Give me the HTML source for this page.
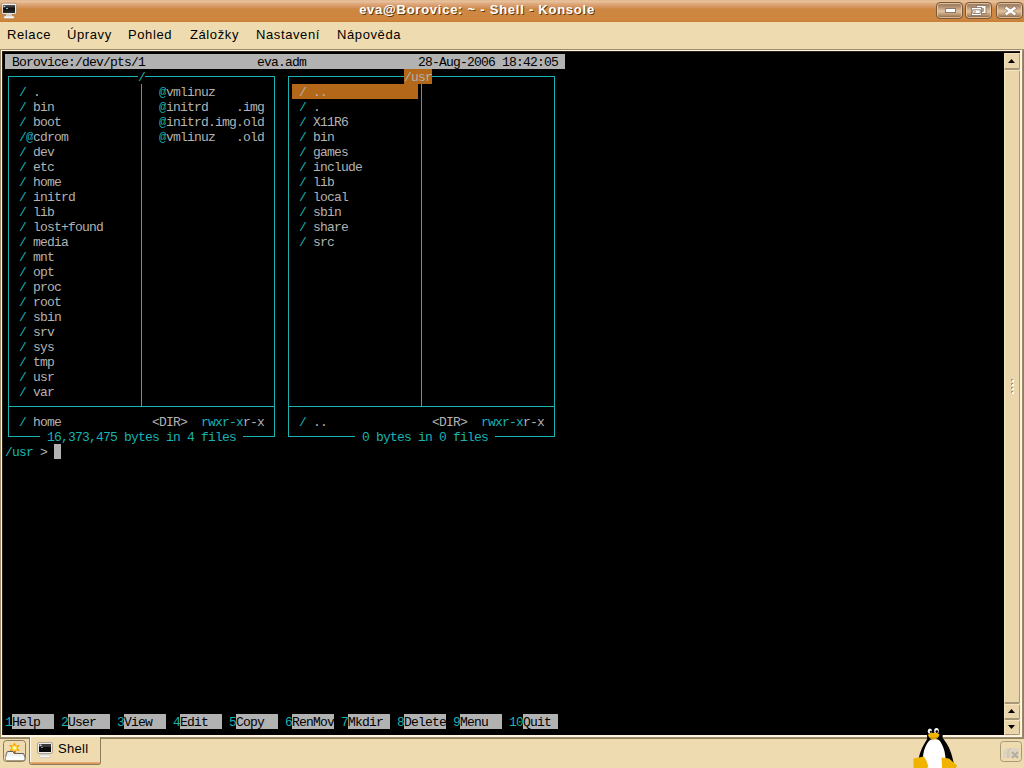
<!DOCTYPE html>
<html><head><meta charset="utf-8"><style>
*{margin:0;padding:0;box-sizing:border-box}
html,body{width:1024px;height:768px;overflow:hidden;background:#eedcb0;position:relative;font-family:"Liberation Sans",sans-serif}
.r{position:absolute}
.t{position:absolute;height:15px;line-height:15px;padding-top:1px;font-family:"Liberation Mono",monospace;font-size:13px;letter-spacing:-0.8px;white-space:pre}
#title{position:absolute;left:0;top:0;width:1024px;height:22px;background:linear-gradient(#dfae84 0px,#e8c6a0 1px,#e2b088 3px,#dba070 5px,#d49460 7px,#cd8740 9px,#cd8740 20px,#cb7f38 21px)}
#ttext{position:absolute;left:277px;top:0;width:400px;text-align:center;color:#fff;font-weight:bold;font-size:13px;letter-spacing:0.75px;line-height:20px;text-shadow:1px 1px 0 rgba(60,30,0,0.75)}
.btn{position:absolute;top:2px;width:27px;height:17px;border:1px solid #7a5838;border-radius:4px;background:linear-gradient(#9a7a5a 0%,#a88868 20%,#e2c29e 55%,#b89470 80%,#7a5636 100%);box-shadow:inset 0 0 0 1px rgba(236,206,170,0.8)}
.btn svg{position:absolute;left:0;top:0}
#menu span{position:absolute;top:27px;font-size:13px;letter-spacing:0.6px;line-height:16px;color:#000}
#term{position:absolute;left:2px;top:51px;width:1002px;height:684px;background:#000;overflow:hidden}
#sb{position:absolute;left:1004px;top:0;width:16px;height:0}
.sbb{position:absolute;left:0;width:16px;background:#ead6aa;border-left:1px solid #f6e4bc;border-top:1px solid #f6e4bc;border-right:1px solid #a8987a;border-bottom:2px solid #a8987a;border-radius:2px}
.sbb svg{position:absolute;left:-1px;top:-1px}
#tabbar{position:absolute;left:0;top:735px;width:1024px;height:33px}
#bline{position:absolute;left:0;top:2px;width:1024px;height:2px;background:linear-gradient(#a4946f,#8c7c5c)}
#newbtn{position:absolute;left:3px;top:5px;width:23px;height:22px}
#tab{position:absolute;left:29px;top:2px;width:72px;height:28px;border-left:1px solid #8c7c5c;border-right:1px solid #8c7c5c;border-bottom:1px solid #8c7c5c;border-radius:0 0 3px 3px;background:#eedcb0;overflow:hidden;box-shadow:inset 1px 0 0 #fff8e8}
#tabface{position:absolute;left:0;bottom:0;width:100%;height:2px;background:linear-gradient(#eab078,#d89050)}
#tabtxt{position:absolute;left:28px;top:4px;font-size:13px;letter-spacing:0.3px;line-height:16px;color:#000}
#closetab{position:absolute;left:1000px;top:6px;width:22px;height:21px}
</style></head><body>
<div id="title"><div id="ttext">eva@Borovice: ~ - Shell - Konsole</div><div id="ticon" style="position:absolute;left:0;top:0;width:22px;height:22px"><svg width="22" height="22"><defs><linearGradient id="scr" x1="0" y1="0" x2="0" y2="1"><stop offset="0" stop-color="#5a5a5a"/><stop offset="0.45" stop-color="#101010"/><stop offset="1" stop-color="#303030"/></linearGradient></defs><rect x="1.8" y="3.3" width="14.6" height="11" rx="1.2" fill="#f0f0f0" stroke="#7a5a3a" stroke-opacity="0.55" stroke-width="0.8"/><rect x="3" y="5" width="12" height="8" fill="url(#scr)"/><path d="M3.6 5.6 L5.6 6.6 L3.6 7.6 Z" fill="#cde"/><rect x="6" y="8" width="2" height="1" fill="#9ab"/><rect x="6" y="14.2" width="6" height="2" fill="#dcdcdc"/><rect x="3.8" y="16" width="10.5" height="2.6" rx="1.3" fill="#f6f6f6" stroke="#7a5a3a" stroke-opacity="0.4" stroke-width="0.6"/></svg></div>
<div class="btn" style="left:936px"><svg width="27" height="17"><rect x="8.5" y="5.5" width="10" height="4" fill="#fff" stroke="#8a7a6a"/></svg></div>
<div class="btn" style="left:965px"><svg width="27" height="17"><rect x="10.5" y="2.5" width="9.5" height="8" fill="#fff" stroke="#8a7a6a" stroke-width="0.9"/><rect x="13.5" y="5.5" width="4" height="3" fill="#c8a078" stroke="#8a7a6a" stroke-width="0.6"/><rect x="5.5" y="4.5" width="10" height="8" fill="#fff" stroke="#8a7a6a" stroke-width="0.9"/><rect x="6.8" y="6.8" width="7.4" height="3.6" fill="#fff" stroke="#7a6a5a" stroke-width="0.8"/><rect x="7.5" y="7.5" width="2.5" height="2.2" fill="#d8b088"/></svg></div>
<div class="btn" style="left:996px"><svg width="27" height="17"><path d="M9.6 5.2 L17.4 10.8 M17.4 5.2 L9.6 10.8" stroke="#8a7a6a" stroke-width="3.6" stroke-linecap="square"/><path d="M9.6 5.2 L17.4 10.8 M17.4 5.2 L9.6 10.8" stroke="#fff" stroke-width="2.4" stroke-linecap="square"/></svg></div></div>
<div id="menu"><span style="left:7px">Relace</span><span style="left:67px">Úpravy</span><span style="left:128px">Pohled</span><span style="left:190px">Záložky</span><span style="left:256px">Nastavení</span><span style="left:337px">Nápověda</span></div>
<div id="term"></div>
<div class="r" style="left:0;top:49px;width:1024px;height:1px;background:#9c8c6c"></div>
<div class="r" style="left:0;top:49px;width:1px;height:690px;background:#9c8c6c"></div>
<div class="r" style="left:1022px;top:50px;width:2px;height:689px;background:linear-gradient(90deg,#a0906e,#887858)"></div><div class="r" style="left:1021px;top:49px;width:2px;height:2px;background:#b8a888;border-radius:0 2px 0 0"></div>
<div class="r" style="left:1px;top:50px;width:1021px;height:1px;background:#fff6e4"></div>
<div class="r" style="left:1px;top:50px;width:1px;height:687px;background:#fff6e4"></div>
<div class="r" style="left:1020px;top:50px;width:2px;height:687px;background:linear-gradient(90deg,#fff0d4,#fffaf0)"></div>
<div class="r" style="left:1px;top:735px;width:1021px;height:2px;background:linear-gradient(#fff0d4,#fffaf0)"></div>
<div class="r" style="left:2px;top:51px;width:1018px;height:2px;background:#000"></div><div class="r" style="left:2px;top:51px;width:1018px;height:1px;background:#2a2216"></div><div class="r" style="left:2px;top:51px;width:1px;height:684px;background:#2a2216"></div>
<div id="sb">
 <div class="sbb" style="top:53px;height:17px"><svg width="16" height="17"><path d="M4 10 L11 10 L7.5 6 Z" fill="#000"/></svg></div>
 <div class="sbb" style="top:70px;height:634px"><svg width="16" height="634"><g fill="#a8987a"><rect x="7" y="309" width="2" height="1"/><rect x="7" y="310" width="1" height="1"/><rect x="7" y="313" width="2" height="1"/><rect x="7" y="314" width="1" height="1"/><rect x="7" y="317" width="2" height="1"/><rect x="7" y="318" width="1" height="1"/><rect x="7" y="321" width="2" height="1"/><rect x="7" y="322" width="1" height="1"/></g><g fill="#fffaf0"><rect x="8" y="310" width="2" height="2"/><rect x="8" y="314" width="2" height="2"/><rect x="8" y="318" width="2" height="2"/><rect x="8" y="322" width="2" height="2"/></g></svg></div>
 <div class="sbb" style="top:704px;height:16px"><svg width="16" height="16"><path d="M4 9 L11 9 L7.5 5 Z" fill="#000"/></svg></div>
 <div class="sbb" style="top:720px;height:15px;border-bottom-width:1px"><svg width="16" height="15"><path d="M4 5 L11 5 L7.5 9 Z" fill="#000"/></svg></div>
</div>
<div id="tabbar">
 <div id="bline"></div>
 <div id="newbtn"><svg width="23" height="22"><rect x="0.5" y="0.5" width="22" height="21" rx="3" fill="#eedcb0" stroke="#8c7c5c"/>
<g transform="translate(11.5,8)"><path d="M0 -5.5 L1.8 -2.4 L5.3 -3 L2.9 0 L5.3 3 L1.8 2.4 L0 5.5 L-1.8 2.4 L-5.3 3 L-2.9 0 L-5.3 -3 L-1.8 -2.4 Z" fill="#ff9800"/><circle r="2.8" fill="#ffe030"/><circle r="1.4" fill="#fffbd0"/></g>
<path d="M3 20 L3 14.5 L4.5 11.5 L10 11.5 L11 13.5 L20.5 13.5 L21.5 16 L21.5 20 Z" fill="#f0f0f0" stroke="#505050" stroke-width="0.9"/>
<path d="M12 11 L12 13" stroke="#505050" stroke-width="0.9"/><rect x="3" y="16.5" width="18.5" height="3.5" fill="#fff"/></svg></div>
 <div id="tab"><div id="tabface"></div>
  <svg style="position:absolute;left:7px;top:5px" width="16" height="16"><rect x="0.5" y="0.5" width="15" height="11" rx="1.5" fill="#ececec" stroke="#9a8a7a" stroke-opacity="0.7"/><rect x="2" y="2" width="12" height="8" fill="#0c0c0c"/><rect x="2" y="2" width="12" height="3" fill="#3a3a3a"/><rect x="2.5" y="2.5" width="2" height="1.5" fill="#cde"/><rect x="4" y="5" width="2" height="1" fill="#889"/><rect x="5" y="12" width="6" height="1.5" fill="#d8d8d8"/><rect x="2.5" y="13" width="11" height="2.5" rx="1.2" fill="#f6f6f6" stroke="#9a8a7a" stroke-opacity="0.5" stroke-width="0.6"/></svg>
  <span id="tabtxt">Shell</span>
 </div>
 <div id="closetab"><svg width="22" height="21"><rect x="0.5" y="0.5" width="21" height="20" rx="3" fill="none" stroke="#a8987a"/><path d="M3 17 L3 10 L6.5 7 L19 7 L19 17 Z" fill="#ddd3c0"/><path d="M8 17 L8 10 L11 7" stroke="#c4b8a4" stroke-width="0.9" fill="none"/><path d="M12 11 L18 17 M18 11 L12 17" stroke="#b4ac9c" stroke-width="1.8"/></svg></div>
</div>
<svg id="tux" width="50" height="48" style="position:absolute;left:910px;top:720px">
 <path d="M17.2 19 C16.6 8 17.5 1 25 1 C32 1 33 8 32.6 18 C36 22 40 28 42 36 L43.5 42 L44 48 L8 48 L8.5 40 C9.5 33 12 27 17.2 19 Z" fill="#000"/>
 <path d="M20 20 C15 25 12.5 33 13 41 L14 48 L35 48 C36.5 38 35 27 29 20 C26 18.5 23 18.5 20 20 Z" fill="#fff"/>
 <ellipse cx="19.9" cy="11.2" rx="2.1" ry="2.6" fill="#fff"/><ellipse cx="26.5" cy="10.9" rx="2.3" ry="2.8" fill="#fff"/>
 <circle cx="20.8" cy="11.8" r="1.1" fill="#000"/><circle cx="26.8" cy="11.6" r="1.3" fill="#000"/>
 <path d="M18 15 C19 12.5 27 12 29.5 14.5 C29 17.5 26 19.5 23.5 19.5 C21 19.5 18.5 17.5 18 15 Z" fill="#f0b400"/>
 <path d="M19.5 17.5 C22 18.5 25 18.5 28 17" stroke="#b88000" stroke-width="0.8" fill="none"/>
 <path d="M3.5 38.5 L14 36.5 L16.5 41 L18.5 47 L17 48 L3.5 48 Z" fill="#f0b400"/>
 <path d="M31.5 37.5 L39 38.5 L47 45.5 L46 48 L32 48 Z" fill="#f0b400"/>
 <path d="M36 26 L40 32" stroke="#444" stroke-width="0.6" stroke-dasharray="1 2"/>
</svg>
<div style="position:absolute;left:0;top:0">
<div class="r" style="left:8px;top:76px;width:267px;height:1px;background:#18b2b2"></div><div class="r" style="left:8px;top:436px;width:267px;height:1px;background:#18b2b2"></div><div class="r" style="left:8px;top:406px;width:267px;height:1px;background:#18b2b2"></div><div class="r" style="left:8px;top:76px;width:1px;height:361px;background:#18b2b2"></div><div class="r" style="left:274px;top:76px;width:1px;height:361px;background:#18b2b2"></div><div class="r" style="left:141px;top:84px;width:1px;height:323px;background:#18b2b2"></div><div class="r" style="left:288px;top:76px;width:267px;height:1px;background:#18b2b2"></div><div class="r" style="left:288px;top:436px;width:267px;height:1px;background:#18b2b2"></div><div class="r" style="left:288px;top:406px;width:267px;height:1px;background:#18b2b2"></div><div class="r" style="left:288px;top:76px;width:1px;height:361px;background:#18b2b2"></div><div class="r" style="left:554px;top:76px;width:1px;height:361px;background:#18b2b2"></div><div class="r" style="left:421px;top:84px;width:1px;height:323px;background:#18b2b2"></div><div class="t" style="left:5px;top:54px;width:560px;color:#000;background:#b2b2b2;">&#160;&#160;&#160;&#160;&#160;&#160;&#160;&#160;&#160;&#160;&#160;&#160;&#160;&#160;&#160;&#160;&#160;&#160;&#160;&#160;&#160;&#160;&#160;&#160;&#160;&#160;&#160;&#160;&#160;&#160;&#160;&#160;&#160;&#160;&#160;&#160;&#160;&#160;&#160;&#160;&#160;&#160;&#160;&#160;&#160;&#160;&#160;&#160;&#160;&#160;&#160;&#160;&#160;&#160;&#160;&#160;&#160;&#160;&#160;&#160;&#160;&#160;&#160;&#160;&#160;&#160;&#160;&#160;&#160;&#160;&#160;&#160;&#160;&#160;&#160;&#160;&#160;&#160;&#160;&#160;</div><div class="t" style="left:12px;top:54px;width:133px;color:#000;background:#b2b2b2;">Borovice:/dev/pts/1</div><div class="t" style="left:257px;top:54px;width:49px;color:#000;background:#b2b2b2;">eva.adm</div><div class="t" style="left:418px;top:54px;width:140px;color:#000;background:#b2b2b2;">28-Aug-2006&#160;18:42:05</div><div class="t" style="left:138px;top:69px;width:7px;color:#18b2b2;background:#000;">/</div><div class="t" style="left:404px;top:69px;width:28px;color:#b2b2b2;background:#b26818;">/usr</div><div class="t" style="left:19px;top:84px;width:7px;color:#18b2b2;background:#000;">/</div><div class="t" style="left:33px;top:84px;width:7px;color:#b2b2b2;background:#000;">.</div><div class="t" style="left:19px;top:99px;width:7px;color:#18b2b2;background:#000;">/</div><div class="t" style="left:33px;top:99px;width:21px;color:#b2b2b2;background:#000;">bin</div><div class="t" style="left:19px;top:114px;width:7px;color:#18b2b2;background:#000;">/</div><div class="t" style="left:33px;top:114px;width:28px;color:#b2b2b2;background:#000;">boot</div><div class="t" style="left:19px;top:129px;width:14px;color:#18b2b2;background:#000;">/@</div><div class="t" style="left:33px;top:129px;width:35px;color:#b2b2b2;background:#000;">cdrom</div><div class="t" style="left:19px;top:144px;width:7px;color:#18b2b2;background:#000;">/</div><div class="t" style="left:33px;top:144px;width:21px;color:#b2b2b2;background:#000;">dev</div><div class="t" style="left:19px;top:159px;width:7px;color:#18b2b2;background:#000;">/</div><div class="t" style="left:33px;top:159px;width:21px;color:#b2b2b2;background:#000;">etc</div><div class="t" style="left:19px;top:174px;width:7px;color:#18b2b2;background:#000;">/</div><div class="t" style="left:33px;top:174px;width:28px;color:#b2b2b2;background:#000;">home</div><div class="t" style="left:19px;top:189px;width:7px;color:#18b2b2;background:#000;">/</div><div class="t" style="left:33px;top:189px;width:42px;color:#b2b2b2;background:#000;">initrd</div><div class="t" style="left:19px;top:204px;width:7px;color:#18b2b2;background:#000;">/</div><div class="t" style="left:33px;top:204px;width:21px;color:#b2b2b2;background:#000;">lib</div><div class="t" style="left:19px;top:219px;width:7px;color:#18b2b2;background:#000;">/</div><div class="t" style="left:33px;top:219px;width:70px;color:#b2b2b2;background:#000;">lost+found</div><div class="t" style="left:19px;top:234px;width:7px;color:#18b2b2;background:#000;">/</div><div class="t" style="left:33px;top:234px;width:35px;color:#b2b2b2;background:#000;">media</div><div class="t" style="left:19px;top:249px;width:7px;color:#18b2b2;background:#000;">/</div><div class="t" style="left:33px;top:249px;width:21px;color:#b2b2b2;background:#000;">mnt</div><div class="t" style="left:19px;top:264px;width:7px;color:#18b2b2;background:#000;">/</div><div class="t" style="left:33px;top:264px;width:21px;color:#b2b2b2;background:#000;">opt</div><div class="t" style="left:19px;top:279px;width:7px;color:#18b2b2;background:#000;">/</div><div class="t" style="left:33px;top:279px;width:28px;color:#b2b2b2;background:#000;">proc</div><div class="t" style="left:19px;top:294px;width:7px;color:#18b2b2;background:#000;">/</div><div class="t" style="left:33px;top:294px;width:28px;color:#b2b2b2;background:#000;">root</div><div class="t" style="left:19px;top:309px;width:7px;color:#18b2b2;background:#000;">/</div><div class="t" style="left:33px;top:309px;width:28px;color:#b2b2b2;background:#000;">sbin</div><div class="t" style="left:19px;top:324px;width:7px;color:#18b2b2;background:#000;">/</div><div class="t" style="left:33px;top:324px;width:21px;color:#b2b2b2;background:#000;">srv</div><div class="t" style="left:19px;top:339px;width:7px;color:#18b2b2;background:#000;">/</div><div class="t" style="left:33px;top:339px;width:21px;color:#b2b2b2;background:#000;">sys</div><div class="t" style="left:19px;top:354px;width:7px;color:#18b2b2;background:#000;">/</div><div class="t" style="left:33px;top:354px;width:21px;color:#b2b2b2;background:#000;">tmp</div><div class="t" style="left:19px;top:369px;width:7px;color:#18b2b2;background:#000;">/</div><div class="t" style="left:33px;top:369px;width:21px;color:#b2b2b2;background:#000;">usr</div><div class="t" style="left:19px;top:384px;width:7px;color:#18b2b2;background:#000;">/</div><div class="t" style="left:33px;top:384px;width:21px;color:#b2b2b2;background:#000;">var</div><div class="t" style="left:159px;top:84px;width:7px;color:#18b2b2;background:#000;">@</div><div class="t" style="left:166px;top:84px;width:49px;color:#b2b2b2;background:#000;">vmlinuz</div><div class="t" style="left:159px;top:99px;width:7px;color:#18b2b2;background:#000;">@</div><div class="t" style="left:166px;top:99px;width:98px;color:#b2b2b2;background:#000;">initrd&#160;&#160;&#160;&#160;.img</div><div class="t" style="left:159px;top:114px;width:7px;color:#18b2b2;background:#000;">@</div><div class="t" style="left:166px;top:114px;width:98px;color:#b2b2b2;background:#000;">initrd.img.old</div><div class="t" style="left:159px;top:129px;width:7px;color:#18b2b2;background:#000;">@</div><div class="t" style="left:166px;top:129px;width:98px;color:#b2b2b2;background:#000;">vmlinuz&#160;&#160;&#160;.old</div><div class="t" style="left:292px;top:84px;width:126px;color:#b2b2b2;background:#b26818;">&#160;&#160;&#160;&#160;&#160;&#160;&#160;&#160;&#160;&#160;&#160;&#160;&#160;&#160;&#160;&#160;&#160;&#160;</div><div class="t" style="left:299px;top:84px;width:7px;color:#b2b2b2;background:#b26818;">/</div><div class="t" style="left:313px;top:84px;width:14px;color:#b2b2b2;background:#b26818;">..</div><div class="t" style="left:299px;top:99px;width:7px;color:#18b2b2;background:#000;">/</div><div class="t" style="left:313px;top:99px;width:7px;color:#b2b2b2;background:#000;">.</div><div class="t" style="left:299px;top:114px;width:7px;color:#18b2b2;background:#000;">/</div><div class="t" style="left:313px;top:114px;width:35px;color:#b2b2b2;background:#000;">X11R6</div><div class="t" style="left:299px;top:129px;width:7px;color:#18b2b2;background:#000;">/</div><div class="t" style="left:313px;top:129px;width:21px;color:#b2b2b2;background:#000;">bin</div><div class="t" style="left:299px;top:144px;width:7px;color:#18b2b2;background:#000;">/</div><div class="t" style="left:313px;top:144px;width:35px;color:#b2b2b2;background:#000;">games</div><div class="t" style="left:299px;top:159px;width:7px;color:#18b2b2;background:#000;">/</div><div class="t" style="left:313px;top:159px;width:49px;color:#b2b2b2;background:#000;">include</div><div class="t" style="left:299px;top:174px;width:7px;color:#18b2b2;background:#000;">/</div><div class="t" style="left:313px;top:174px;width:21px;color:#b2b2b2;background:#000;">lib</div><div class="t" style="left:299px;top:189px;width:7px;color:#18b2b2;background:#000;">/</div><div class="t" style="left:313px;top:189px;width:35px;color:#b2b2b2;background:#000;">local</div><div class="t" style="left:299px;top:204px;width:7px;color:#18b2b2;background:#000;">/</div><div class="t" style="left:313px;top:204px;width:28px;color:#b2b2b2;background:#000;">sbin</div><div class="t" style="left:299px;top:219px;width:7px;color:#18b2b2;background:#000;">/</div><div class="t" style="left:313px;top:219px;width:35px;color:#b2b2b2;background:#000;">share</div><div class="t" style="left:299px;top:234px;width:7px;color:#18b2b2;background:#000;">/</div><div class="t" style="left:313px;top:234px;width:21px;color:#b2b2b2;background:#000;">src</div><div class="t" style="left:19px;top:414px;width:7px;color:#18b2b2;background:#000;">/</div><div class="t" style="left:33px;top:414px;width:28px;color:#b2b2b2;background:#000;">home</div><div class="t" style="left:152px;top:414px;width:35px;color:#b2b2b2;background:#000;">&lt;DIR&gt;</div><div class="t" style="left:201px;top:414px;width:42px;color:#18b2b2;background:#000;">rwxr-x</div><div class="t" style="left:243px;top:414px;width:21px;color:#b2b2b2;background:#000;">r-x</div><div class="t" style="left:299px;top:414px;width:7px;color:#18b2b2;background:#000;">/</div><div class="t" style="left:313px;top:414px;width:14px;color:#b2b2b2;background:#000;">..</div><div class="t" style="left:432px;top:414px;width:35px;color:#b2b2b2;background:#000;">&lt;DIR&gt;</div><div class="t" style="left:481px;top:414px;width:42px;color:#18b2b2;background:#000;">rwxr-x</div><div class="t" style="left:523px;top:414px;width:21px;color:#b2b2b2;background:#000;">r-x</div><div class="t" style="left:40px;top:429px;width:203px;color:#18b2b2;background:#000;">&#160;16,373,475&#160;bytes&#160;in&#160;4&#160;files&#160;</div><div class="t" style="left:355px;top:429px;width:140px;color:#18b2b2;background:#000;">&#160;0&#160;bytes&#160;in&#160;0&#160;files&#160;</div><div class="t" style="left:5px;top:444px;width:35px;color:#18b2b2;background:#000;">/usr&#160;</div><div class="t" style="left:40px;top:444px;width:14px;color:#b2b2b2;background:#000;">&gt;&#160;</div><div class="t" style="left:54px;top:444px;width:7px;color:#b2b2b2;background:#b2b2b2;">&#160;</div><div class="t" style="left:5px;top:714px;width:7px;color:#18b2b2;background:#000;">1</div><div class="t" style="left:12px;top:714px;width:42px;color:#000;background:#b2b2b2;">Help&#160;&#160;</div><div class="t" style="left:61px;top:714px;width:7px;color:#18b2b2;background:#000;">2</div><div class="t" style="left:68px;top:714px;width:42px;color:#000;background:#b2b2b2;">User&#160;&#160;</div><div class="t" style="left:117px;top:714px;width:7px;color:#18b2b2;background:#000;">3</div><div class="t" style="left:124px;top:714px;width:42px;color:#000;background:#b2b2b2;">View&#160;&#160;</div><div class="t" style="left:173px;top:714px;width:7px;color:#18b2b2;background:#000;">4</div><div class="t" style="left:180px;top:714px;width:42px;color:#000;background:#b2b2b2;">Edit&#160;&#160;</div><div class="t" style="left:229px;top:714px;width:7px;color:#18b2b2;background:#000;">5</div><div class="t" style="left:236px;top:714px;width:42px;color:#000;background:#b2b2b2;">Copy&#160;&#160;</div><div class="t" style="left:285px;top:714px;width:7px;color:#18b2b2;background:#000;">6</div><div class="t" style="left:292px;top:714px;width:42px;color:#000;background:#b2b2b2;">RenMov</div><div class="t" style="left:341px;top:714px;width:7px;color:#18b2b2;background:#000;">7</div><div class="t" style="left:348px;top:714px;width:42px;color:#000;background:#b2b2b2;">Mkdir&#160;</div><div class="t" style="left:397px;top:714px;width:7px;color:#18b2b2;background:#000;">8</div><div class="t" style="left:404px;top:714px;width:42px;color:#000;background:#b2b2b2;">Delete</div><div class="t" style="left:453px;top:714px;width:7px;color:#18b2b2;background:#000;">9</div><div class="t" style="left:460px;top:714px;width:42px;color:#000;background:#b2b2b2;">Menu&#160;&#160;</div><div class="t" style="left:509px;top:714px;width:14px;color:#18b2b2;background:#000;">10</div><div class="t" style="left:523px;top:714px;width:35px;color:#000;background:#b2b2b2;">Quit&#160;</div>
</div>
</body></html>
